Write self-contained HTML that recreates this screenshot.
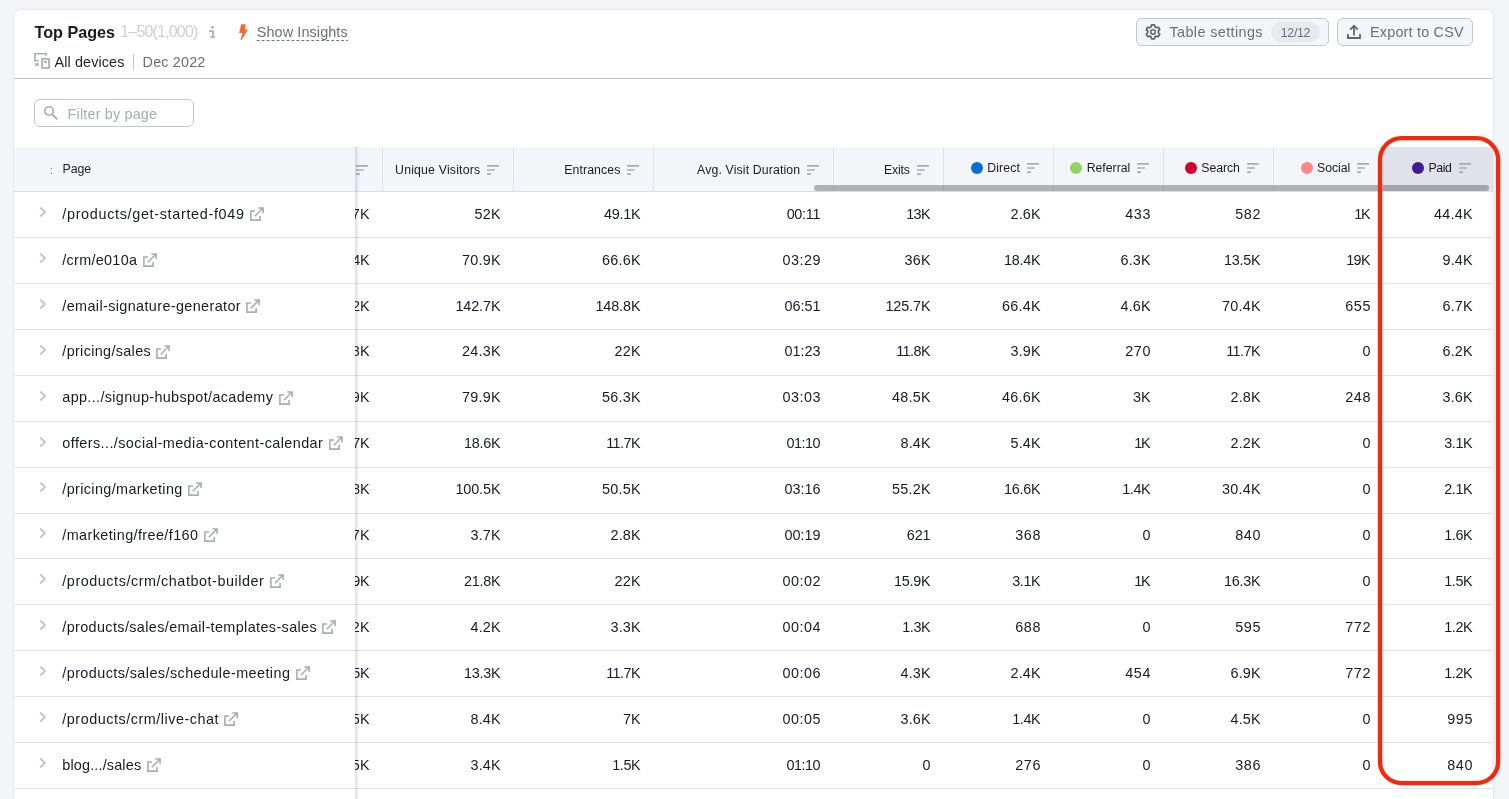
<!DOCTYPE html>
<html lang="en"><head><meta charset="utf-8"><title>Top Pages</title>
<style>
*{box-sizing:border-box;margin:0;padding:0}
html,body{width:1509px;height:799px;overflow:hidden;background:#f4f5f9;font-family:"Liberation Sans", sans-serif;}
#root{position:absolute;left:0;top:0;width:1509px;height:799px;overflow:hidden;will-change:transform}
.a{position:absolute;display:block}
.t{position:absolute;white-space:pre;line-height:20px;height:20px}
.ln{left:14px;width:1479px;height:1px;background:#e0e1e9}
.btn{position:absolute;top:18px;height:28px;border:1px solid #c4c7cf;border-radius:6px;background:#f4f5f9}
</style></head>
<body>
<div id="root">
<div class="a" id="card" style="left:14px;top:10px;width:1479.3px;height:800px;border-radius:6px;background:#fff;box-shadow:0 0 2px 1px rgba(25,27,35,.065)"></div>
<!-- toolbar -->
<svg class="a" style="left:207px;top:24px" width="10" height="16" viewBox="0 0 10 16"><circle cx="5.5" cy="3.3" r="1.35" fill="#a9abb6"/><path d="M2.1 7.2H5.9V13.6M2.9 13H7.9" stroke="#a9abb6" stroke-width="1.7" fill="none"/></svg><svg class="a" style="left:237px;top:22px" width="14" height="20" viewBox="0 0 14 20"><path d="M4.15 2.16H8.72L7.93 7.53H10.91L4.6 17.9H3.55L5.54 10.91H2.17Z" fill="#ff642d"/></svg><svg class="a" style="left:33px;top:52px" width="18" height="18" viewBox="0 0 18 18"><path d="M13.1 3.8V1.8H1.9V8.8H5.7" stroke="#a9abb6" stroke-width="1.6" fill="none"/><rect x="2.2" y="11.2" width="3.5" height="2.6" fill="#a9abb6"/><rect x="9.05" y="6.95" width="7.0" height="9.0" stroke="#a9abb6" stroke-width="1.7" fill="none"/><rect x="11" y="8.9" width="3.1" height="1.9" fill="#a9abb6"/></svg>
<svg class="a" style="left:256px;top:39px" width="94" height="3" viewBox="0 0 94 3"><path d="M0.7 1.55H92" stroke="#6c6e79" stroke-width="1" stroke-dasharray="2.9 2.07" fill="none"/></svg>
<div class="a" style="left:133px;top:54px;width:1px;height:16px;background:#c4c7cf"></div>
<div class="btn" style="left:1136px;width:193px"></div>
<div class="a" style="left:1271px;top:22px;width:49px;height:20px;border-radius:10px;background:#e7e9ef"></div>
<div class="btn" style="left:1337px;width:136px"></div>
<svg class="a" style="left:1145px;top:24px" width="16" height="16" viewBox="0 0 16 16"><path d="M6.14 2.83L6.58 0.99L9.42 0.99L9.86 2.83L11.50 3.78L13.32 3.25L14.73 5.70L13.37 7.00L13.37 8.90L14.73 10.20L13.32 12.65L11.50 12.12L9.86 13.07L9.42 14.91L6.58 14.91L6.14 13.07L4.50 12.12L2.68 12.65L1.27 10.20L2.63 8.90L2.63 7.00L1.27 5.70L2.68 3.25L4.50 3.78Z" stroke="#62646f" stroke-width="1.75" fill="none" stroke-linejoin="round"/><circle cx="8" cy="7.95" r="2.25" stroke="#62646f" stroke-width="1.6" fill="none"/></svg><svg class="a" style="left:1346px;top:24px" width="16" height="16" viewBox="0 0 16 16"><path d="M1.9 10.1V14H14V10.1M8 11.5V1.8M4.2 5.6L8 1.8L11.8 5.6" stroke="#62646f" stroke-width="1.8" fill="none"/></svg>
<div class="a" style="left:14px;top:78px;width:1479px;height:1px;background:#c4c7cf"></div>
<div class="a" style="left:34px;top:99px;width:160px;height:28px;border:1px solid #c4c7cf;border-radius:6px;background:#fff"></div>
<svg class="a" style="left:42px;top:104px" width="18" height="18" viewBox="0 0 18 18"><circle cx="7.1" cy="7" r="4.25" stroke="#a9abb6" stroke-width="1.7" fill="none"/><path d="M10.3 10.3L15.3 15.4" stroke="#a9abb6" stroke-width="1.8" fill="none"/></svg>
<!-- table header -->
<div class="a" style="left:14px;top:147px;width:1479px;height:44.2px;background:#f4f5f9"></div>
<div class="a" style="left:1383px;top:147px;width:110px;height:44.2px;background:#e0e1e9"></div>
<div class="a" style="left:14px;top:191px;width:1479px;height:1px;background:#dcdde5"></div>
<div class="a" style="left:382px;top:147px;width:1px;height:44px;background:#e0e1e9"></div><div class="a" style="left:513px;top:147px;width:1px;height:44px;background:#e0e1e9"></div><div class="a" style="left:653px;top:147px;width:1px;height:44px;background:#e0e1e9"></div><div class="a" style="left:833px;top:147px;width:1px;height:44px;background:#e0e1e9"></div><div class="a" style="left:943px;top:147px;width:1px;height:44px;background:#e0e1e9"></div><div class="a" style="left:1053px;top:147px;width:1px;height:44px;background:#e0e1e9"></div><div class="a" style="left:1163px;top:147px;width:1px;height:44px;background:#e0e1e9"></div><div class="a" style="left:1273px;top:147px;width:1px;height:44px;background:#e0e1e9"></div>
<div class="a ln" style="top:237.10px"></div><div class="a ln" style="top:283.00px"></div><div class="a ln" style="top:328.90px"></div><div class="a ln" style="top:374.80px"></div><div class="a ln" style="top:420.70px"></div><div class="a ln" style="top:466.60px"></div><div class="a ln" style="top:512.50px"></div><div class="a ln" style="top:558.40px"></div><div class="a ln" style="top:604.30px"></div><div class="a ln" style="top:650.20px"></div><div class="a ln" style="top:696.10px"></div><div class="a ln" style="top:742.00px"></div><div class="a ln" style="top:787.90px"></div>
<!-- hidden (scrolled) column -->
<svg class="a" style="left:356.0px;top:163.8px" width="12" height="12" viewBox="0 0 12 12"><path d="M0.1 1.9H11.9M0.1 6H7.7M0.1 10.1H3.9" stroke="#a9abb6" stroke-width="1.6" fill="none"/></svg>
<span class="t hid" style="top:203.75px;font-size:14.4px;color:#191b23;letter-spacing:0.228px;right:1139.27px;">52.7K</span><span class="t hid" style="top:249.65px;font-size:14.4px;color:#191b23;letter-spacing:-0.262px;right:1139.76px;">71.4K</span><span class="t hid" style="top:295.55px;font-size:14.4px;color:#191b23;letter-spacing:-0.113px;right:1139.61px;">143.2K</span><span class="t hid" style="top:341.45px;font-size:14.4px;color:#191b23;letter-spacing:0.228px;right:1139.27px;">24.8K</span><span class="t hid" style="top:387.35px;font-size:14.4px;color:#191b23;letter-spacing:0.228px;right:1139.27px;">80.9K</span><span class="t hid" style="top:433.25px;font-size:14.4px;color:#191b23;letter-spacing:-0.262px;right:1139.76px;">18.7K</span><span class="t hid" style="top:479.15px;font-size:14.4px;color:#191b23;letter-spacing:-0.113px;right:1139.61px;">100.8K</span><span class="t hid" style="top:525.05px;font-size:14.4px;color:#191b23;letter-spacing:0.123px;right:1139.38px;">3.7K</span><span class="t hid" style="top:570.95px;font-size:14.4px;color:#191b23;letter-spacing:-0.262px;right:1139.76px;">21.9K</span><span class="t hid" style="top:616.85px;font-size:14.4px;color:#191b23;letter-spacing:0.123px;right:1139.38px;">4.2K</span><span class="t hid" style="top:662.75px;font-size:14.4px;color:#191b23;letter-spacing:-0.262px;right:1139.76px;">13.5K</span><span class="t hid" style="top:708.65px;font-size:14.4px;color:#191b23;letter-spacing:0.123px;right:1139.38px;">8.5K</span><span class="t hid" style="top:754.55px;font-size:14.4px;color:#191b23;letter-spacing:0.123px;right:1139.38px;">3.5K</span>
<!-- sticky page column -->
<div class="a" style="left:14px;top:192px;width:341.4px;height:607px;background:#fff"></div>
<div class="a" style="left:14px;top:147px;width:341.4px;height:44px;background:#f4f5f9"></div>
<div class="a" style="left:14px;top:191px;width:342px;height:1px;background:#dcdde5"></div>
<div class="a ln" style="width:342px;top:237.10px"></div><div class="a ln" style="width:342px;top:283.00px"></div><div class="a ln" style="width:342px;top:328.90px"></div><div class="a ln" style="width:342px;top:374.80px"></div><div class="a ln" style="width:342px;top:420.70px"></div><div class="a ln" style="width:342px;top:466.60px"></div><div class="a ln" style="width:342px;top:512.50px"></div><div class="a ln" style="width:342px;top:558.40px"></div><div class="a ln" style="width:342px;top:604.30px"></div><div class="a ln" style="width:342px;top:650.20px"></div><div class="a ln" style="width:342px;top:696.10px"></div><div class="a ln" style="width:342px;top:742.00px"></div><div class="a ln" style="width:342px;top:787.90px"></div>
<div class="a" style="left:355.4px;top:147px;width:5px;height:652px;background:linear-gradient(90deg,rgba(25,27,35,.16),rgba(25,27,35,.055) 50%,rgba(25,27,35,0))"></div>
<span class="t pg" style="top:203.75px;font-size:14.4px;color:#191b23;letter-spacing:0.676px;left:62.30px;">/products/get-started-f049</span><span class="t pg" style="top:249.65px;font-size:14.4px;color:#191b23;letter-spacing:0.300px;left:62.30px;">/crm/e010a</span><span class="t pg" style="top:295.55px;font-size:14.4px;color:#191b23;letter-spacing:0.381px;left:62.30px;">/email-signature-generator</span><span class="t pg" style="top:341.45px;font-size:14.4px;color:#191b23;letter-spacing:0.340px;left:62.30px;">/pricing/sales</span><span class="t pg" style="top:387.35px;font-size:14.4px;color:#191b23;letter-spacing:0.350px;left:62.30px;">app.../signup-hubspot/academy</span><span class="t pg" style="top:433.25px;font-size:14.4px;color:#191b23;letter-spacing:0.421px;left:62.30px;">offers.../social-media-content-calendar</span><span class="t pg" style="top:479.15px;font-size:14.4px;color:#191b23;letter-spacing:0.378px;left:62.30px;">/pricing/marketing</span><span class="t pg" style="top:525.05px;font-size:14.4px;color:#191b23;letter-spacing:0.406px;left:62.30px;">/marketing/free/f160</span><span class="t pg" style="top:570.95px;font-size:14.4px;color:#191b23;letter-spacing:0.544px;left:62.30px;">/products/crm/chatbot-builder</span><span class="t pg" style="top:616.85px;font-size:14.4px;color:#191b23;letter-spacing:0.379px;left:62.30px;">/products/sales/email-templates-sales</span><span class="t pg" style="top:662.75px;font-size:14.4px;color:#191b23;letter-spacing:0.426px;left:62.30px;">/products/sales/schedule-meeting</span><span class="t pg" style="top:708.65px;font-size:14.4px;color:#191b23;letter-spacing:0.525px;left:62.30px;">/products/crm/live-chat</span><span class="t pg" style="top:754.55px;font-size:14.4px;color:#191b23;letter-spacing:0.167px;left:62.30px;">blog.../sales</span>
<svg class="a" style="left:38px;top:205.0px" width="10" height="14" viewBox="0 0 10 14"><path d="M2.7 3L7 7L2.7 11" stroke="#c2c4cc" stroke-width="1.8" fill="none" stroke-linecap="round" stroke-linejoin="round"/></svg><svg class="a" style="left:249.7px;top:206.9px" width="15" height="15" viewBox="0 0 15 15"><path d="M5 4H0.9V13.1H10.1V9.1M4.8 9.2L13 1M8.3 1H13.1V5.9" stroke="#a9abb6" stroke-width="1.6" fill="none" stroke-linejoin="miter"/></svg><svg class="a" style="left:38px;top:250.9px" width="10" height="14" viewBox="0 0 10 14"><path d="M2.7 3L7 7L2.7 11" stroke="#c2c4cc" stroke-width="1.8" fill="none" stroke-linecap="round" stroke-linejoin="round"/></svg><svg class="a" style="left:142.7px;top:252.8px" width="15" height="15" viewBox="0 0 15 15"><path d="M5 4H0.9V13.1H10.1V9.1M4.8 9.2L13 1M8.3 1H13.1V5.9" stroke="#a9abb6" stroke-width="1.6" fill="none" stroke-linejoin="miter"/></svg><svg class="a" style="left:38px;top:296.8px" width="10" height="14" viewBox="0 0 10 14"><path d="M2.7 3L7 7L2.7 11" stroke="#c2c4cc" stroke-width="1.8" fill="none" stroke-linecap="round" stroke-linejoin="round"/></svg><svg class="a" style="left:246.3px;top:298.7px" width="15" height="15" viewBox="0 0 15 15"><path d="M5 4H0.9V13.1H10.1V9.1M4.8 9.2L13 1M8.3 1H13.1V5.9" stroke="#a9abb6" stroke-width="1.6" fill="none" stroke-linejoin="miter"/></svg><svg class="a" style="left:38px;top:342.7px" width="10" height="14" viewBox="0 0 10 14"><path d="M2.7 3L7 7L2.7 11" stroke="#c2c4cc" stroke-width="1.8" fill="none" stroke-linecap="round" stroke-linejoin="round"/></svg><svg class="a" style="left:156.4px;top:344.6px" width="15" height="15" viewBox="0 0 15 15"><path d="M5 4H0.9V13.1H10.1V9.1M4.8 9.2L13 1M8.3 1H13.1V5.9" stroke="#a9abb6" stroke-width="1.6" fill="none" stroke-linejoin="miter"/></svg><svg class="a" style="left:38px;top:388.6px" width="10" height="14" viewBox="0 0 10 14"><path d="M2.7 3L7 7L2.7 11" stroke="#c2c4cc" stroke-width="1.8" fill="none" stroke-linecap="round" stroke-linejoin="round"/></svg><svg class="a" style="left:278.6px;top:390.5px" width="15" height="15" viewBox="0 0 15 15"><path d="M5 4H0.9V13.1H10.1V9.1M4.8 9.2L13 1M8.3 1H13.1V5.9" stroke="#a9abb6" stroke-width="1.6" fill="none" stroke-linejoin="miter"/></svg><svg class="a" style="left:38px;top:434.5px" width="10" height="14" viewBox="0 0 10 14"><path d="M2.7 3L7 7L2.7 11" stroke="#c2c4cc" stroke-width="1.8" fill="none" stroke-linecap="round" stroke-linejoin="round"/></svg><svg class="a" style="left:328.5px;top:436.4px" width="15" height="15" viewBox="0 0 15 15"><path d="M5 4H0.9V13.1H10.1V9.1M4.8 9.2L13 1M8.3 1H13.1V5.9" stroke="#a9abb6" stroke-width="1.6" fill="none" stroke-linejoin="miter"/></svg><svg class="a" style="left:38px;top:480.4px" width="10" height="14" viewBox="0 0 10 14"><path d="M2.7 3L7 7L2.7 11" stroke="#c2c4cc" stroke-width="1.8" fill="none" stroke-linecap="round" stroke-linejoin="round"/></svg><svg class="a" style="left:188.0px;top:482.3px" width="15" height="15" viewBox="0 0 15 15"><path d="M5 4H0.9V13.1H10.1V9.1M4.8 9.2L13 1M8.3 1H13.1V5.9" stroke="#a9abb6" stroke-width="1.6" fill="none" stroke-linejoin="miter"/></svg><svg class="a" style="left:38px;top:526.3px" width="10" height="14" viewBox="0 0 10 14"><path d="M2.7 3L7 7L2.7 11" stroke="#c2c4cc" stroke-width="1.8" fill="none" stroke-linecap="round" stroke-linejoin="round"/></svg><svg class="a" style="left:203.7px;top:528.2px" width="15" height="15" viewBox="0 0 15 15"><path d="M5 4H0.9V13.1H10.1V9.1M4.8 9.2L13 1M8.3 1H13.1V5.9" stroke="#a9abb6" stroke-width="1.6" fill="none" stroke-linejoin="miter"/></svg><svg class="a" style="left:38px;top:572.2px" width="10" height="14" viewBox="0 0 10 14"><path d="M2.7 3L7 7L2.7 11" stroke="#c2c4cc" stroke-width="1.8" fill="none" stroke-linecap="round" stroke-linejoin="round"/></svg><svg class="a" style="left:269.6px;top:574.1px" width="15" height="15" viewBox="0 0 15 15"><path d="M5 4H0.9V13.1H10.1V9.1M4.8 9.2L13 1M8.3 1H13.1V5.9" stroke="#a9abb6" stroke-width="1.6" fill="none" stroke-linejoin="miter"/></svg><svg class="a" style="left:38px;top:618.1px" width="10" height="14" viewBox="0 0 10 14"><path d="M2.7 3L7 7L2.7 11" stroke="#c2c4cc" stroke-width="1.8" fill="none" stroke-linecap="round" stroke-linejoin="round"/></svg><svg class="a" style="left:322.4px;top:620.0px" width="15" height="15" viewBox="0 0 15 15"><path d="M5 4H0.9V13.1H10.1V9.1M4.8 9.2L13 1M8.3 1H13.1V5.9" stroke="#a9abb6" stroke-width="1.6" fill="none" stroke-linejoin="miter"/></svg><svg class="a" style="left:38px;top:664.0px" width="10" height="14" viewBox="0 0 10 14"><path d="M2.7 3L7 7L2.7 11" stroke="#c2c4cc" stroke-width="1.8" fill="none" stroke-linecap="round" stroke-linejoin="round"/></svg><svg class="a" style="left:295.6px;top:665.9px" width="15" height="15" viewBox="0 0 15 15"><path d="M5 4H0.9V13.1H10.1V9.1M4.8 9.2L13 1M8.3 1H13.1V5.9" stroke="#a9abb6" stroke-width="1.6" fill="none" stroke-linejoin="miter"/></svg><svg class="a" style="left:38px;top:709.9px" width="10" height="14" viewBox="0 0 10 14"><path d="M2.7 3L7 7L2.7 11" stroke="#c2c4cc" stroke-width="1.8" fill="none" stroke-linecap="round" stroke-linejoin="round"/></svg><svg class="a" style="left:224.3px;top:711.8px" width="15" height="15" viewBox="0 0 15 15"><path d="M5 4H0.9V13.1H10.1V9.1M4.8 9.2L13 1M8.3 1H13.1V5.9" stroke="#a9abb6" stroke-width="1.6" fill="none" stroke-linejoin="miter"/></svg><svg class="a" style="left:38px;top:755.8px" width="10" height="14" viewBox="0 0 10 14"><path d="M2.7 3L7 7L2.7 11" stroke="#c2c4cc" stroke-width="1.8" fill="none" stroke-linecap="round" stroke-linejoin="round"/></svg><svg class="a" style="left:146.8px;top:757.7px" width="15" height="15" viewBox="0 0 15 15"><path d="M5 4H0.9V13.1H10.1V9.1M4.8 9.2L13 1M8.3 1H13.1V5.9" stroke="#a9abb6" stroke-width="1.6" fill="none" stroke-linejoin="miter"/></svg>
<!-- rest of texts -->
<svg class="a" style="left:487.0px;top:163.8px" width="12" height="12" viewBox="0 0 12 12"><path d="M0.1 1.9H11.9M0.1 6H7.7M0.1 10.1H3.9" stroke="#a9abb6" stroke-width="1.6" fill="none"/></svg><svg class="a" style="left:627.0px;top:163.8px" width="12" height="12" viewBox="0 0 12 12"><path d="M0.1 1.9H11.9M0.1 6H7.7M0.1 10.1H3.9" stroke="#a9abb6" stroke-width="1.6" fill="none"/></svg><svg class="a" style="left:807.0px;top:163.8px" width="12" height="12" viewBox="0 0 12 12"><path d="M0.1 1.9H11.9M0.1 6H7.7M0.1 10.1H3.9" stroke="#a9abb6" stroke-width="1.6" fill="none"/></svg><svg class="a" style="left:917.0px;top:163.8px" width="12" height="12" viewBox="0 0 12 12"><path d="M0.1 1.9H11.9M0.1 6H7.7M0.1 10.1H3.9" stroke="#a9abb6" stroke-width="1.6" fill="none"/></svg><svg class="a" style="left:1027.0px;top:162.0px" width="12" height="12" viewBox="0 0 12 12"><path d="M0.1 1.9H11.9M0.1 6H7.7M0.1 10.1H3.9" stroke="#a9abb6" stroke-width="1.6" fill="none"/></svg><svg class="a" style="left:1137.0px;top:162.0px" width="12" height="12" viewBox="0 0 12 12"><path d="M0.1 1.9H11.9M0.1 6H7.7M0.1 10.1H3.9" stroke="#a9abb6" stroke-width="1.6" fill="none"/></svg><svg class="a" style="left:1247.0px;top:162.0px" width="12" height="12" viewBox="0 0 12 12"><path d="M0.1 1.9H11.9M0.1 6H7.7M0.1 10.1H3.9" stroke="#a9abb6" stroke-width="1.6" fill="none"/></svg><svg class="a" style="left:1357.0px;top:162.0px" width="12" height="12" viewBox="0 0 12 12"><path d="M0.1 1.9H11.9M0.1 6H7.7M0.1 10.1H3.9" stroke="#a9abb6" stroke-width="1.6" fill="none"/></svg><svg class="a" style="left:1459.0px;top:162.0px" width="12" height="12" viewBox="0 0 12 12"><path d="M0.1 1.9H11.9M0.1 6H7.7M0.1 10.1H3.9" stroke="#a9abb6" stroke-width="1.6" fill="none"/></svg>
<div class="a" style="left:971.0px;top:161.9px;width:12px;height:12px;border-radius:50%;background:#0a6dd1"></div><div class="a" style="left:1070.0px;top:161.9px;width:12px;height:12px;border-radius:50%;background:#91d560"></div><div class="a" style="left:1185.0px;top:161.9px;width:12px;height:12px;border-radius:50%;background:#d1002f"></div><div class="a" style="left:1301.0px;top:161.9px;width:12px;height:12px;border-radius:50%;background:#ff8786"></div><div class="a" style="left:1412.0px;top:161.9px;width:12px;height:12px;border-radius:50%;background:#431996"></div>
<span class="t" style="top:21.80px;font-size:16.2px;color:#191b23;font-weight:700;letter-spacing:-0.032px;left:34.60px;">Top Pages</span><span class="t" style="top:22.30px;font-size:16px;color:#cdcfd7;letter-spacing:-0.830px;left:120.30px;">1–50(1,000)</span><span class="t" style="top:21.70px;font-size:14.4px;color:#6c6e79;letter-spacing:0.117px;left:256.70px;">Show Insights</span><span class="t" style="top:51.80px;font-size:14.4px;color:#23252e;letter-spacing:0.100px;left:54.60px;">All devices</span><span class="t" style="top:51.80px;font-size:14.4px;color:#6c6e79;letter-spacing:0.156px;left:142.60px;">Dec 2022</span><span class="t" style="top:103.90px;font-size:14.4px;color:#a9abb6;letter-spacing:0.170px;left:67.60px;">Filter by page</span><span class="t" style="top:22.20px;font-size:14.4px;color:#6c6e79;letter-spacing:0.385px;left:1169.50px;">Table settings</span><span class="t" style="top:23.00px;font-size:12.3px;color:#6c6e79;letter-spacing:-0.295px;left:1280.80px;">12/12</span><span class="t" style="top:22.20px;font-size:14.4px;color:#6c6e79;letter-spacing:0.201px;left:1370.00px;">Export to CSV</span><span class="t" style="top:160.40px;font-size:11.5px;color:#7d7f8a;left:49.80px;">:</span><span class="t" style="top:158.90px;font-size:12.3px;color:#191b23;letter-spacing:-0.073px;left:62.50px;">Page</span><span class="t" style="top:160.20px;font-size:12.3px;color:#191b23;letter-spacing:0.180px;left:395.10px;">Unique Visitors</span><span class="t" style="top:160.20px;font-size:12.3px;color:#191b23;letter-spacing:0.078px;left:564.30px;">Entrances</span><span class="t" style="top:160.20px;font-size:12.3px;color:#191b23;letter-spacing:0.127px;left:697.10px;">Avg. Visit Duration</span><span class="t" style="top:160.20px;font-size:12.3px;color:#191b23;letter-spacing:-0.164px;left:884.00px;">Exits</span><span class="t" style="top:157.90px;font-size:12.3px;color:#191b23;letter-spacing:0.095px;left:987.30px;">Direct</span><span class="t" style="top:157.90px;font-size:12.3px;color:#191b23;letter-spacing:-0.021px;left:1086.70px;">Referral</span><span class="t" style="top:157.90px;font-size:12.3px;color:#191b23;letter-spacing:-0.094px;left:1201.30px;">Search</span><span class="t" style="top:157.90px;font-size:12.3px;color:#191b23;letter-spacing:-0.040px;left:1317.00px;">Social</span><span class="t" style="top:157.90px;font-size:12.3px;color:#191b23;letter-spacing:-0.408px;left:1428.50px;">Paid</span><span class="t" style="top:203.75px;font-size:14.4px;color:#191b23;letter-spacing:0.197px;right:1008.30px;">52K</span><span class="t" style="top:203.75px;font-size:14.4px;color:#191b23;letter-spacing:-0.262px;right:868.76px;">49.1K</span><span class="t" style="top:203.75px;font-size:14.4px;color:#191b23;letter-spacing:-0.271px;right:688.77px;">00:11</span><span class="t" style="top:203.75px;font-size:14.4px;color:#191b23;letter-spacing:-0.620px;right:579.12px;">13K</span><span class="t" style="top:203.75px;font-size:14.4px;color:#191b23;letter-spacing:0.123px;right:468.38px;">2.6K</span><span class="t" style="top:203.75px;font-size:14.4px;color:#191b23;letter-spacing:0.645px;right:357.86px;">433</span><span class="t" style="top:203.75px;font-size:14.4px;color:#191b23;letter-spacing:0.645px;right:247.86px;">582</span><span class="t" style="top:203.75px;font-size:14.4px;color:#191b23;letter-spacing:-1.255px;right:139.75px;">1K</span><span class="t" style="top:203.75px;font-size:14.4px;color:#191b23;letter-spacing:0.228px;right:36.27px;">44.4K</span><span class="t" style="top:249.65px;font-size:14.4px;color:#191b23;letter-spacing:0.228px;right:1008.27px;">70.9K</span><span class="t" style="top:249.65px;font-size:14.4px;color:#191b23;letter-spacing:0.228px;right:868.27px;">66.6K</span><span class="t" style="top:249.65px;font-size:14.4px;color:#191b23;letter-spacing:0.497px;right:688.00px;">03:29</span><span class="t" style="top:249.65px;font-size:14.4px;color:#191b23;letter-spacing:0.197px;right:578.30px;">36K</span><span class="t" style="top:249.65px;font-size:14.4px;color:#191b23;letter-spacing:-0.262px;right:468.76px;">18.4K</span><span class="t" style="top:249.65px;font-size:14.4px;color:#191b23;letter-spacing:0.123px;right:358.38px;">6.3K</span><span class="t" style="top:249.65px;font-size:14.4px;color:#191b23;letter-spacing:-0.262px;right:248.76px;">13.5K</span><span class="t" style="top:249.65px;font-size:14.4px;color:#191b23;letter-spacing:-0.620px;right:139.12px;">19K</span><span class="t" style="top:249.65px;font-size:14.4px;color:#191b23;letter-spacing:0.123px;right:36.38px;">9.4K</span><span class="t" style="top:295.55px;font-size:14.4px;color:#191b23;letter-spacing:-0.113px;right:1008.61px;">142.7K</span><span class="t" style="top:295.55px;font-size:14.4px;color:#191b23;letter-spacing:-0.113px;right:868.61px;">148.8K</span><span class="t" style="top:295.55px;font-size:14.4px;color:#191b23;letter-spacing:0.007px;right:688.49px;">06:51</span><span class="t" style="top:295.55px;font-size:14.4px;color:#191b23;letter-spacing:-0.113px;right:578.61px;">125.7K</span><span class="t" style="top:295.55px;font-size:14.4px;color:#191b23;letter-spacing:0.228px;right:468.27px;">66.4K</span><span class="t" style="top:295.55px;font-size:14.4px;color:#191b23;letter-spacing:0.123px;right:358.38px;">4.6K</span><span class="t" style="top:295.55px;font-size:14.4px;color:#191b23;letter-spacing:0.228px;right:248.27px;">70.4K</span><span class="t" style="top:295.55px;font-size:14.4px;color:#191b23;letter-spacing:0.645px;right:137.86px;">655</span><span class="t" style="top:295.55px;font-size:14.4px;color:#191b23;letter-spacing:0.123px;right:36.38px;">6.7K</span><span class="t" style="top:341.45px;font-size:14.4px;color:#191b23;letter-spacing:0.228px;right:1008.27px;">24.3K</span><span class="t" style="top:341.45px;font-size:14.4px;color:#191b23;letter-spacing:0.197px;right:868.30px;">22K</span><span class="t" style="top:341.45px;font-size:14.4px;color:#191b23;letter-spacing:0.007px;right:688.49px;">01:23</span><span class="t" style="top:341.45px;font-size:14.4px;color:#191b23;letter-spacing:-0.539px;right:579.04px;">11.8K</span><span class="t" style="top:341.45px;font-size:14.4px;color:#191b23;letter-spacing:0.123px;right:468.38px;">3.9K</span><span class="t" style="top:341.45px;font-size:14.4px;color:#191b23;letter-spacing:0.645px;right:357.86px;">270</span><span class="t" style="top:341.45px;font-size:14.4px;color:#191b23;letter-spacing:-0.539px;right:249.04px;">11.7K</span><span class="t" style="top:341.45px;font-size:14.4px;color:#191b23;right:138.50px;">0</span><span class="t" style="top:341.45px;font-size:14.4px;color:#191b23;letter-spacing:0.123px;right:36.38px;">6.2K</span><span class="t" style="top:387.35px;font-size:14.4px;color:#191b23;letter-spacing:0.228px;right:1008.27px;">79.9K</span><span class="t" style="top:387.35px;font-size:14.4px;color:#191b23;letter-spacing:0.228px;right:868.27px;">56.3K</span><span class="t" style="top:387.35px;font-size:14.4px;color:#191b23;letter-spacing:0.497px;right:688.00px;">03:03</span><span class="t" style="top:387.35px;font-size:14.4px;color:#191b23;letter-spacing:0.228px;right:578.27px;">48.5K</span><span class="t" style="top:387.35px;font-size:14.4px;color:#191b23;letter-spacing:0.228px;right:468.27px;">46.6K</span><span class="t" style="top:387.35px;font-size:14.4px;color:#191b23;letter-spacing:-0.030px;right:358.53px;">3K</span><span class="t" style="top:387.35px;font-size:14.4px;color:#191b23;letter-spacing:0.123px;right:248.38px;">2.8K</span><span class="t" style="top:387.35px;font-size:14.4px;color:#191b23;letter-spacing:0.645px;right:137.86px;">248</span><span class="t" style="top:387.35px;font-size:14.4px;color:#191b23;letter-spacing:0.123px;right:36.38px;">3.6K</span><span class="t" style="top:433.25px;font-size:14.4px;color:#191b23;letter-spacing:-0.262px;right:1008.76px;">18.6K</span><span class="t" style="top:433.25px;font-size:14.4px;color:#191b23;letter-spacing:-0.539px;right:869.04px;">11.7K</span><span class="t" style="top:433.25px;font-size:14.4px;color:#191b23;letter-spacing:-0.483px;right:688.98px;">01:10</span><span class="t" style="top:433.25px;font-size:14.4px;color:#191b23;letter-spacing:0.123px;right:578.38px;">8.4K</span><span class="t" style="top:433.25px;font-size:14.4px;color:#191b23;letter-spacing:0.123px;right:468.38px;">5.4K</span><span class="t" style="top:433.25px;font-size:14.4px;color:#191b23;letter-spacing:-1.255px;right:359.75px;">1K</span><span class="t" style="top:433.25px;font-size:14.4px;color:#191b23;letter-spacing:0.123px;right:248.38px;">2.2K</span><span class="t" style="top:433.25px;font-size:14.4px;color:#191b23;right:138.50px;">0</span><span class="t" style="top:433.25px;font-size:14.4px;color:#191b23;letter-spacing:-0.490px;right:36.99px;">3.1K</span><span class="t" style="top:479.15px;font-size:14.4px;color:#191b23;letter-spacing:-0.113px;right:1008.61px;">100.5K</span><span class="t" style="top:479.15px;font-size:14.4px;color:#191b23;letter-spacing:0.228px;right:868.27px;">50.5K</span><span class="t" style="top:479.15px;font-size:14.4px;color:#191b23;letter-spacing:0.007px;right:688.49px;">03:16</span><span class="t" style="top:479.15px;font-size:14.4px;color:#191b23;letter-spacing:0.228px;right:578.27px;">55.2K</span><span class="t" style="top:479.15px;font-size:14.4px;color:#191b23;letter-spacing:-0.262px;right:468.76px;">16.6K</span><span class="t" style="top:479.15px;font-size:14.4px;color:#191b23;letter-spacing:-0.490px;right:358.99px;">1.4K</span><span class="t" style="top:479.15px;font-size:14.4px;color:#191b23;letter-spacing:0.228px;right:248.27px;">30.4K</span><span class="t" style="top:479.15px;font-size:14.4px;color:#191b23;right:138.50px;">0</span><span class="t" style="top:479.15px;font-size:14.4px;color:#191b23;letter-spacing:-0.490px;right:36.99px;">2.1K</span><span class="t" style="top:525.05px;font-size:14.4px;color:#191b23;letter-spacing:0.123px;right:1008.38px;">3.7K</span><span class="t" style="top:525.05px;font-size:14.4px;color:#191b23;letter-spacing:0.123px;right:868.38px;">2.8K</span><span class="t" style="top:525.05px;font-size:14.4px;color:#191b23;letter-spacing:0.007px;right:688.49px;">00:19</span><span class="t" style="top:525.05px;font-size:14.4px;color:#191b23;letter-spacing:-0.172px;right:578.67px;">621</span><span class="t" style="top:525.05px;font-size:14.4px;color:#191b23;letter-spacing:0.645px;right:467.86px;">368</span><span class="t" style="top:525.05px;font-size:14.4px;color:#191b23;right:358.50px;">0</span><span class="t" style="top:525.05px;font-size:14.4px;color:#191b23;letter-spacing:0.645px;right:247.86px;">840</span><span class="t" style="top:525.05px;font-size:14.4px;color:#191b23;right:138.50px;">0</span><span class="t" style="top:525.05px;font-size:14.4px;color:#191b23;letter-spacing:-0.490px;right:36.99px;">1.6K</span><span class="t" style="top:570.95px;font-size:14.4px;color:#191b23;letter-spacing:-0.262px;right:1008.76px;">21.8K</span><span class="t" style="top:570.95px;font-size:14.4px;color:#191b23;letter-spacing:0.197px;right:868.30px;">22K</span><span class="t" style="top:570.95px;font-size:14.4px;color:#191b23;letter-spacing:0.497px;right:688.00px;">00:02</span><span class="t" style="top:570.95px;font-size:14.4px;color:#191b23;letter-spacing:-0.262px;right:578.76px;">15.9K</span><span class="t" style="top:570.95px;font-size:14.4px;color:#191b23;letter-spacing:-0.490px;right:468.99px;">3.1K</span><span class="t" style="top:570.95px;font-size:14.4px;color:#191b23;letter-spacing:-1.255px;right:359.75px;">1K</span><span class="t" style="top:570.95px;font-size:14.4px;color:#191b23;letter-spacing:-0.262px;right:248.76px;">16.3K</span><span class="t" style="top:570.95px;font-size:14.4px;color:#191b23;right:138.50px;">0</span><span class="t" style="top:570.95px;font-size:14.4px;color:#191b23;letter-spacing:-0.490px;right:36.99px;">1.5K</span><span class="t" style="top:616.85px;font-size:14.4px;color:#191b23;letter-spacing:0.123px;right:1008.38px;">4.2K</span><span class="t" style="top:616.85px;font-size:14.4px;color:#191b23;letter-spacing:0.123px;right:868.38px;">3.3K</span><span class="t" style="top:616.85px;font-size:14.4px;color:#191b23;letter-spacing:0.497px;right:688.00px;">00:04</span><span class="t" style="top:616.85px;font-size:14.4px;color:#191b23;letter-spacing:-0.490px;right:578.99px;">1.3K</span><span class="t" style="top:616.85px;font-size:14.4px;color:#191b23;letter-spacing:0.645px;right:467.86px;">688</span><span class="t" style="top:616.85px;font-size:14.4px;color:#191b23;right:358.50px;">0</span><span class="t" style="top:616.85px;font-size:14.4px;color:#191b23;letter-spacing:0.645px;right:247.86px;">595</span><span class="t" style="top:616.85px;font-size:14.4px;color:#191b23;letter-spacing:0.645px;right:137.86px;">772</span><span class="t" style="top:616.85px;font-size:14.4px;color:#191b23;letter-spacing:-0.490px;right:36.99px;">1.2K</span><span class="t" style="top:662.75px;font-size:14.4px;color:#191b23;letter-spacing:-0.262px;right:1008.76px;">13.3K</span><span class="t" style="top:662.75px;font-size:14.4px;color:#191b23;letter-spacing:-0.539px;right:869.04px;">11.7K</span><span class="t" style="top:662.75px;font-size:14.4px;color:#191b23;letter-spacing:0.497px;right:688.00px;">00:06</span><span class="t" style="top:662.75px;font-size:14.4px;color:#191b23;letter-spacing:0.123px;right:578.38px;">4.3K</span><span class="t" style="top:662.75px;font-size:14.4px;color:#191b23;letter-spacing:0.123px;right:468.38px;">2.4K</span><span class="t" style="top:662.75px;font-size:14.4px;color:#191b23;letter-spacing:0.645px;right:357.86px;">454</span><span class="t" style="top:662.75px;font-size:14.4px;color:#191b23;letter-spacing:0.123px;right:248.38px;">6.9K</span><span class="t" style="top:662.75px;font-size:14.4px;color:#191b23;letter-spacing:0.645px;right:137.86px;">772</span><span class="t" style="top:662.75px;font-size:14.4px;color:#191b23;letter-spacing:-0.490px;right:36.99px;">1.2K</span><span class="t" style="top:708.65px;font-size:14.4px;color:#191b23;letter-spacing:0.123px;right:1008.38px;">8.4K</span><span class="t" style="top:708.65px;font-size:14.4px;color:#191b23;letter-spacing:-0.030px;right:868.53px;">7K</span><span class="t" style="top:708.65px;font-size:14.4px;color:#191b23;letter-spacing:0.497px;right:688.00px;">00:05</span><span class="t" style="top:708.65px;font-size:14.4px;color:#191b23;letter-spacing:0.123px;right:578.38px;">3.6K</span><span class="t" style="top:708.65px;font-size:14.4px;color:#191b23;letter-spacing:-0.490px;right:468.99px;">1.4K</span><span class="t" style="top:708.65px;font-size:14.4px;color:#191b23;right:358.50px;">0</span><span class="t" style="top:708.65px;font-size:14.4px;color:#191b23;letter-spacing:0.123px;right:248.38px;">4.5K</span><span class="t" style="top:708.65px;font-size:14.4px;color:#191b23;right:138.50px;">0</span><span class="t" style="top:708.65px;font-size:14.4px;color:#191b23;letter-spacing:0.645px;right:35.86px;">995</span><span class="t" style="top:754.55px;font-size:14.4px;color:#191b23;letter-spacing:0.123px;right:1008.38px;">3.4K</span><span class="t" style="top:754.55px;font-size:14.4px;color:#191b23;letter-spacing:-0.490px;right:868.99px;">1.5K</span><span class="t" style="top:754.55px;font-size:14.4px;color:#191b23;letter-spacing:-0.483px;right:688.98px;">01:10</span><span class="t" style="top:754.55px;font-size:14.4px;color:#191b23;right:578.50px;">0</span><span class="t" style="top:754.55px;font-size:14.4px;color:#191b23;letter-spacing:0.645px;right:467.86px;">276</span><span class="t" style="top:754.55px;font-size:14.4px;color:#191b23;right:358.50px;">0</span><span class="t" style="top:754.55px;font-size:14.4px;color:#191b23;letter-spacing:0.645px;right:247.86px;">386</span><span class="t" style="top:754.55px;font-size:14.4px;color:#191b23;right:138.50px;">0</span><span class="t" style="top:754.55px;font-size:14.4px;color:#191b23;letter-spacing:0.645px;right:35.86px;">840</span>
<!-- scrollbar -->
<div class="a" style="left:814px;top:185px;width:675px;height:6px;border-radius:3px;background:rgba(32,34,44,.32)"></div>
<!-- annotation -->
<svg class="a" style="left:1370px;top:130px" width="139" height="669" viewBox="1370 130 139 669"><rect x="1380" y="138.2" width="118.1" height="644.9" rx="21.5" ry="21.5" fill="none" stroke="#f6270b" stroke-width="4.3"/></svg>
</div>
</body></html>
